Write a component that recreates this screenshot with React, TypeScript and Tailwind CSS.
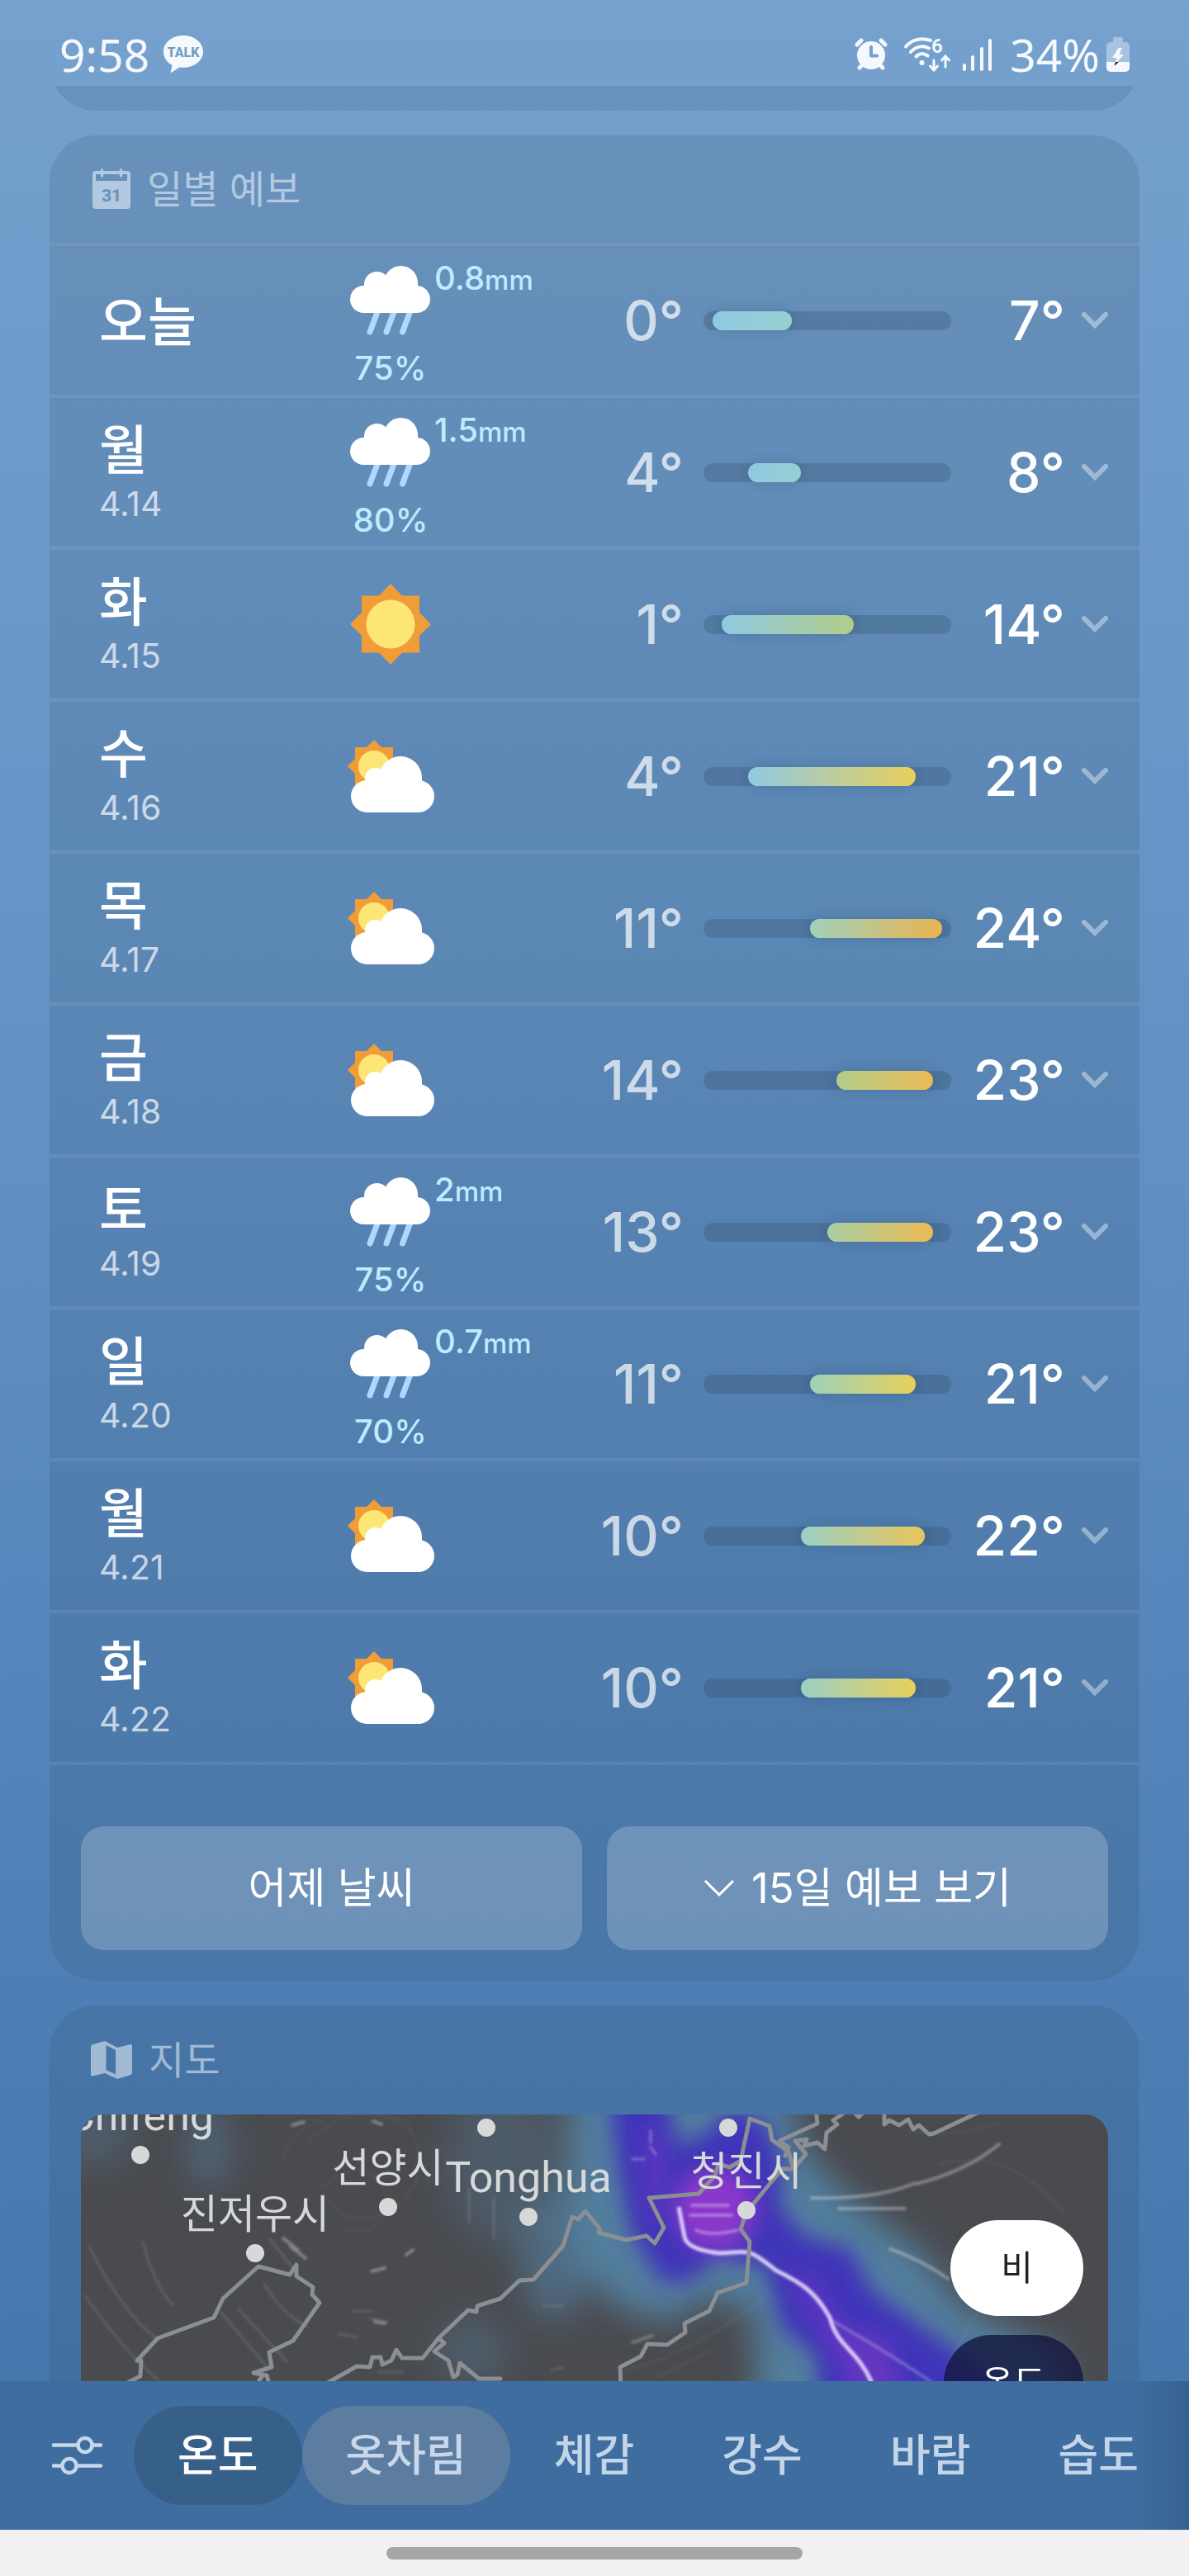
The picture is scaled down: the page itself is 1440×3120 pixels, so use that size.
import type { ReactNode } from "react";

type Sky = "rain" | "sun" | "partly";

type Day = {
  name: string;
  date?: string;
  sky: Sky;
  amount?: string;
  chance?: number;
  low: number;
  high: number;
};

const days: Day[] = [
  { name: "오늘", sky: "rain", amount: "0.8", chance: 75, low: 0, high: 7 },
  { name: "월", date: "4.14", sky: "rain", amount: "1.5", chance: 80, low: 4, high: 8 },
  { name: "화", date: "4.15", sky: "sun", low: 1, high: 14 },
  { name: "수", date: "4.16", sky: "partly", low: 4, high: 21 },
  { name: "목", date: "4.17", sky: "partly", low: 11, high: 24 },
  { name: "금", date: "4.18", sky: "partly", low: 14, high: 23 },
  { name: "토", date: "4.19", sky: "rain", amount: "2", chance: 75, low: 13, high: 23 },
  { name: "일", date: "4.20", sky: "rain", amount: "0.7", chance: 70, low: 11, high: 21 },
  { name: "월", date: "4.21", sky: "partly", low: 10, high: 22 },
  { name: "화", date: "4.22", sky: "partly", low: 10, high: 21 },
];

const tabs = ["온도", "옷차림", "체감", "강수", "바람", "습도"];

// temperature -> bar colour, highest matching step wins
const steps: [number, string][] = [
  [0, "#8fc9e2"],
  [7, "#96d0d0"],
  [10, "#9bd0c4"],
  [11, "#9fd1ba"],
  [13, "#a9cfa2"],
  [14, "#b1cd8a"],
  [21, "#e8d05c"],
  [22, "#e9c55a"],
  [23, "#eabb55"],
  [24, "#eab452"],
];

function colorAt(t: number) {
  return steps.filter(([min]) => t >= min).pop()![1];
}

/* ---------- icons ---------- */

function TalkIcon() {
  return (
    <svg width="50" height="48" viewBox="0 0 50 48" aria-label="KakaoTalk">
      <path
        d="M25 1C11.500 1 1 9.500 1 20.500c0 7 4 13 10.500 16.500L9.500 46.500 20.500 39.500c1.500.2 3 .3 4.500.3 13.500 0 24-8.500 24-19.300S38.500 1 25 1z"
        fill="#f5f9fd"
      />
      <text x="25" y="27" textAnchor="middle" fontSize="16" fontWeight="800" fill="#6f9bc8" fontFamily="Roboto, sans-serif">
        TALK
      </text>
    </svg>
  );
}

function AlarmIcon() {
  return (
    <svg width="40" height="40" viewBox="0 0 40 40" aria-label="Alarm">
      <g stroke="#f5f9fd" strokeWidth="5" strokeLinecap="round">
        <path d="M3 8l5-5M37 8l-5-5M6 36l5-5M34 36l-5-5" />
      </g>
      <circle cx="20" cy="21" r="17" fill="#f5f9fd" />
      <path d="M20 11v10.500h7" fill="none" stroke="#76a1ce" strokeWidth="4" strokeLinecap="round" strokeLinejoin="round" />
    </svg>
  );
}

function WifiIcon() {
  return (
    <svg width="58" height="42" viewBox="0 0 58 42" className="overflow-visible" aria-label="Wi-Fi 6">
      <g fill="none" stroke="#f5f9fd" strokeWidth="4" strokeLinecap="round">
        <path d="M2 11.500C10 2 22 .5 32 4" />
        <path d="M8 18c6-7 15-8.500 22-4.500" />
        <path d="M14.500 23.500c4-4 9-4.500 14-1" />
        <path d="M36 28v11M31.500 35l4.500 5 4.500-5M50 36V24M45.500 28l4.500-5 4.500 5" strokeWidth="3" />
      </g>
      <circle cx="21.500" cy="31" r="3" fill="#f5f9fd" />
      <text x="33" y="19" fontSize="24" fontWeight="600" fill="#f5f9fd" fontFamily="Roboto, sans-serif">
        6
      </text>
    </svg>
  );
}

function SignalIcon() {
  return (
    <svg width="38" height="40" viewBox="0 0 38 40" aria-label="Signal">
      <path d="M3 33v5M13 23v15M24 13v25M34 3v35" stroke="#f5f9fd" strokeWidth="4" strokeLinecap="round" />
    </svg>
  );
}

function BatteryIcon() {
  return (
    <svg width="28" height="42" viewBox="0 0 28 42" aria-label="Charging">
      <path d="M8 2a2 2 0 012-2h8a2 2 0 012 2v4h3a5 5 0 015 5v19H0V11a5 5 0 015-5h3z" fill="#a8c3e0" />
      <path d="M0 30h28v7a5 5 0 01-5 5H5a5 5 0 01-5-5z" fill="#f5f9fd" />
      <path d="M14.500 13L7 25h5.500l-3 9L21 21h-5.500L19 13z" fill="#f5f9fd" />
      <path d="M11 30h4l-5.500 5z" fill="#222" />
    </svg>
  );
}

function CalendarIcon() {
  return (
    <svg width="46" height="50" viewBox="0 0 46 50" aria-hidden="true">
      <path
        fillRule="evenodd"
        d="M4 3h38a4 4 0 014 4v38a4 4 0 01-4 4H4a4 4 0 01-4-4V7a4 4 0 014-4zM4 7v8h38V7z"
        fill="#b2c9df"
      />
      <path d="M11.500 2v7M34.500 2v7" stroke="#b2c9df" strokeWidth="3.500" strokeLinecap="round" />
      <text x="23" y="40" textAnchor="middle" fontSize="21" fontWeight="800" fill="#6994bc" fontFamily="Roboto, sans-serif">
        31
      </text>
    </svg>
  );
}

function MapIcon() {
  return (
    <svg width="50" height="46" viewBox="0 0 50 46" aria-hidden="true">
      <path
        fillRule="evenodd"
        d="M1.500 4.500L17 0l15 8 16-4q2-.5 2 1.500v33q0 2-1.500 2.500L32 46l-15-7-15 3.500q-2 .5-2-1.500V7q0-2 1.500-2.500zM18.500 5v30L30 40.500V11z"
        fill="#a1bad4"
      />
    </svg>
  );
}

function RainIcon() {
  return (
    <svg width="98" height="84" viewBox="0 0 98 84" aria-label="비">
      <path d="M33 56l-9 24M53 56l-9 24M72.500 56l-9 24" stroke="#b0d7fd" strokeWidth="7" strokeLinecap="round" />
      <g fill="#fff">
        <circle cx="16.500" cy="40.500" r="16.500" />
        <circle cx="80.500" cy="40.500" r="16.500" />
        <circle cx="61.500" cy="20.500" r="20.500" />
        <circle cx="32.500" cy="22.500" r="15.500" />
        <path d="M17 22h65v18l-2 17H16.500z" />
      </g>
    </svg>
  );
}

function SunIcon() {
  return (
    <svg width="98" height="98" viewBox="0 0 98 98" aria-label="맑음">
      <path d="M49 0l14 14.500h21V35L98 49 84 63v20.500H63L49 98 35 83.500H14V63L0 49l14-14V14.500h21z" fill="#f09d38" />
      <circle cx="49" cy="49" r="29.500" fill="#fbe676" />
    </svg>
  );
}

function PartlyIcon() {
  return (
    <svg width="105" height="88" viewBox="0 0 105 88" aria-label="구름 조금">
      <path d="M32 0l9 9h14v14l9 9-9 9v14H41l-9 9-9-9H9V41L0 32l9-9V9h14z" fill="#f09d38" />
      <circle cx="32" cy="32" r="19" fill="#fbe676" />
      <g fill="#fff">
        <circle cx="23.500" cy="68.500" r="19.500" />
        <circle cx="85.500" cy="68.500" r="19.500" />
        <circle cx="64" cy="46" r="26" />
        <circle cx="33.500" cy="46.500" r="12.500" />
        <path d="M22 46h68v10l-4 32H23.500z" />
      </g>
    </svg>
  );
}

function SlidersIcon() {
  return (
    <svg width="61" height="48" viewBox="0 0 61 48" aria-hidden="true">
      <g fill="none" stroke="#c5d7ea" strokeWidth="4.500" strokeLinecap="round">
        <path d="M2 11.500h29M49 11.500h10M2 36.500h10M31 36.500h28" />
        <circle cx="40" cy="11.500" r="8.500" />
        <circle cx="21" cy="36.500" r="8.500" />
      </g>
    </svg>
  );
}

const skyIcons: Record<Sky, ReactNode> = {
  rain: <RainIcon />,
  sun: <SunIcon />,
  partly: <PartlyIcon />,
};

/* ---------- pieces ---------- */

function StatusBar() {
  return (
    <header className="flex h-[104px] shrink-0 items-center justify-between pt-7 pr-[72px] pl-[72px] font-['Noto_Sans'] text-[55px] leading-[74px] text-[#f5f9fd]">
      <div className="flex items-center gap-4">
        <span>9:58</span>
        <TalkIcon />
      </div>
      <div className="flex items-center">
        <AlarmIcon />
        <span className="ml-5">
          <WifiIcon />
        </span>
        <span className="ml-3">
          <SignalIcon />
        </span>
        <span className="ml-5">34%</span>
        <span className="ml-2">
          <BatteryIcon />
        </span>
      </div>
    </header>
  );
}

function TempBar({ low, high }: { low: number; high: number }) {
  return (
    <div className="h-[23px] w-[300px] rounded-full bg-[#1e3246]/20 px-[11px]">
      <div
        className="h-full rounded-full shadow-[0_0_16px_rgba(20,50,80,0.22)]"
        style={{
          marginLeft: `${(low / 26) * 100}%`,
          width: `${((high + 2 - low) / 26) * 100}%`,
          background: `linear-gradient(90deg, ${colorAt(low)}, ${colorAt(high)})`,
        }}
      />
    </div>
  );
}

function DayRow({ day }: { day: Day }) {
  return (
    <li className="flex h-[184px] items-center border-b-4 border-white/8 pr-[38px] pl-[60px]">
      <div className="w-[300px] pt-1">
        <p className="text-[64px] leading-[72px] font-medium text-white">{day.name}</p>
        {day.date && <p className="text-[41px] leading-[58px] text-white/70">{day.date}</p>}
      </div>
      <div className="flex h-full w-[106px] flex-col items-center justify-center">
        {skyIcons[day.sky]}
        {day.chance && (
          <p className="mt-4 -mb-4 text-[40px] leading-[48px] font-medium text-[#bdebff]">{day.chance}%</p>
        )}
      </div>
      <div className="h-full flex-1 pt-[15px]">
        {day.amount && (
          <p className="text-[40px] leading-[48px] font-medium text-[#bdebff]">
            {day.amount}
            <span className="text-[33px]">mm</span>
          </p>
        )}
      </div>
      <p className="w-[140px] text-right text-[66px] leading-[80px] font-medium text-white/70">{day.low}°</p>
      <div className="mx-6">
        <TempBar low={day.low} high={day.high} />
      </div>
      <p className="w-[114px] text-right text-[66px] leading-[80px] font-medium text-white">{day.high}°</p>
      <button type="button" aria-label={`${day.name} 상세`} className="ml-5">
        <svg width="32" height="20" viewBox="0 0 32 20" fill="none">
          <path d="M3 3l13 13L29 3" stroke="#fff" strokeOpacity=".4" strokeWidth="6" strokeLinecap="round" />
        </svg>
      </button>
    </li>
  );
}

function MapDrawing() {
  return (
    <svg
      className="absolute inset-0 h-full w-full"
      viewBox="0 0 1244 640"
      preserveAspectRatio="xMidYMin slice"
      aria-label="강수 지도"
    >
      <defs>
        <filter id="soft" x="-50%" y="-50%" width="200%" height="200%">
          <feGaussianBlur stdDeviation="20" />
        </filter>
        <filter id="mid" x="-50%" y="-50%" width="200%" height="200%">
          <feGaussianBlur stdDeviation="13" />
        </filter>
        <filter id="thin" x="-20%" y="-20%" width="140%" height="140%">
          <feGaussianBlur stdDeviation="1.500" />
        </filter>
      </defs>
      <rect width="1244" height="640" fill="#4a4b4f" />

      {/* light rain */}
      <g fill="#527f9f" filter="url(#soft)">
        <path d="M590-40H850L880 50 930 100 1020 170 1070 235 1180 285 1210 400H820L815 240 760 220 720 250 660 240 590 170z" />
        <ellipse cx="575" cy="170" rx="45" ry="80" opacity=".6" />
        <ellipse cx="155" cy="40" rx="26" ry="50" opacity=".5" />
        <ellipse cx="15" cy="15" rx="50" ry="50" opacity=".35" />
        <ellipse cx="475" cy="285" rx="45" ry="40" opacity=".35" />
        <ellipse cx="510" cy="60" rx="70" ry="100" opacity=".3" />
      </g>
      {/* heavy rain */}
      <g fill="#3f36b9" filter="url(#mid)">
        <path d="M638-40H708L722 40 760 20 790-10 830 10 850 60 845 110 880 150 930 160 960 215 1030 265 1110 320 1130 400H900L890 290 850 260 830 185 770 170 735 205 700 200 665 140 650 60z" />
      </g>
      <g fill="#8a37cb" filter="url(#mid)">
        <ellipse cx="768" cy="115" rx="50" ry="50" />
        <ellipse cx="695" cy="70" rx="12" ry="60" opacity=".4" />
        <path d="M855 190l25 5 40 60 60 20 15 60-50 20-40-80z" opacity=".5" />
      </g>

      {/* wind traces */}
      <g fill="none" stroke="#fff" strokeLinecap="round" filter="url(#thin)">
        <g opacity=".12" strokeWidth="3">
          <path d="M75 155q15 55 37 76M10 160q40 80 80 110M170 240l55 65M190 235l60 65M5 220q50 70 90 103M228 150l32 40M222 205q20 35 52 52" />
          <path d="M270 40q60-70 130-20 30 60-30 100-50 20-70-20M290 90q60-50 80 10 0 50-50 40M240 60q40-90 160-50" opacity=".3" />
          <path d="M330 238h22M350 247l22 4M312 266l22 4M360 312h30M470 90v40M500 100v50M560 232h24M570 310l14-4" />
          <path d="M660 310q80-20 170-90M700 317l60-30M1040 60q90-20 150 60M1050 300l60-100M1000 20q60 10 110-10" opacity=".4" />
        </g>
        <g opacity=".32" strokeWidth="4">
          <path d="M256 13l14-4M354 8l10 4M885 101q80 2 125-18M918 114h80M1012 84q60-15 100-48M980 163q40 14 70 36" />
          <path d="M245 150l18 14M254 160l18 14M352 190l16-4M394 170l8-6M356 251l12 2M740 110h44M738 122h50M745 140q20 8 50 0" />
          <path d="M910 250q70 40 120 74M668 276l24-8M690 40l6 8M668 54h14M690 20v14" opacity=".7" />
        </g>
      </g>
      <path
        d="M724 112L731 148Q734 164 774 168C812 166 808 162 842 189 875 205 890 216 907 246 915 280 940 285 957 323L980 380"
        fill="none"
        stroke="#e6dcff"
        strokeWidth="5"
        opacity=".9"
        filter="url(#thin)"
      />

      {/* borders */}
      <g fill="none" stroke="#8b8e92" strokeWidth="5" strokeLinejoin="round" strokeLinecap="round">
        <path d="M40 335L60 323 72 317 73 298 68 298 93 271 161 246 172 223 215 184 253 194 261 182 261 196 281 209 280 218 289 228 257 274 228 288 231 306 209 313 225 316 228 326M216 322l4-6" />
        <path d="M290 330L334 305 350 306 353 294 363 294 365 303 376 298 382 285 389 295 414 295 433 271 469 237 479 239 480 232 508 223 531 201 548 200 584 159 595 124 602 127 611 117 628 138 627 143 660 152 685 147 695 156 706 137 688 101 748 96 768 74 772 60 786 64 799 56 810 5 834 14 837 31 857 45 863 66 849 66 813 110 806 117 799 139 810 154 806 204 771 216 761 238 731 253 732 264 710 279 686 278 678 293 653 306 654 330" />
        <path d="M433 271L440 277 428 287 445 298 451 318 456 315 459 301 482 320 508 320" />
        <path d="M890-5L892 11 846 32 857 40 853 50M863 66L878 48 865 32 879 30 876 38 892 34 901 42 903 22 916 12 911 7 926-3M936-3L942 3 948-3M973-3L973 12 979 7 991 13 1002 6 1008 18 1015 13 1027 24 1033 23 1088-3" />
      </g>

      {/* cities */}
      <g fill="#d6d9d8">
        <circle cx="72" cy="49" r="11" />
        <circle cx="211" cy="168" r="11" />
        <circle cx="372" cy="112" r="11" />
        <circle cx="491" cy="16" r="11" />
        <circle cx="542" cy="124" r="11" />
        <circle cx="784" cy="16" r="11" />
        <circle cx="806" cy="116" r="11" />
      </g>
      <g fill="#d6d9d8" textAnchor="middle" fontSize="52" fontFamily="Roboto, 'Noto Sans CJK KR', sans-serif">
        <text x="72" y="19">Chifeng</text>
        <text x="542" y="94">Tonghua</text>
      </g>
      <g fill="#d6d9d8" textAnchor="middle" fontSize="49" fontFamily="'Noto Sans CJK KR', sans-serif">
        <text x="211" y="138">진저우시</text>
        <text x="372" y="82">선양시</text>
        <text x="806" y="86">청진시</text>
      </g>
    </svg>
  );
}

export default function App() {
  return (
    <div className="flex h-screen flex-col overflow-hidden bg-linear-to-b from-[#76a1ce] from-0% via-[#6090c4] via-45% to-[#4677ad] to-92% font-[Inter,'Noto_Sans_CJK_KR',sans-serif]">
      <StatusBar />

      <main className="flex min-h-0 flex-1 flex-col gap-[30px] overflow-hidden px-[60px]">
        {/* tail of the hourly card */}
        <div className="flex h-[30px] shrink-0 flex-col justify-end overflow-hidden">
          <div className="h-[120px] shrink-0 rounded-[56px] bg-[#28465a]/15" />
        </div>

        <section className="shrink-0 rounded-[56px] bg-[#28465a]/15">
          <h2 className="flex h-[134px] items-center gap-5 border-b-4 border-white/8 pl-[52px] text-[47px] leading-[60px] text-[#b2c9df]">
            <CalendarIcon />
            일별 예보
          </h2>
          <ul>
            {days.map((day, i) => (
              <DayRow key={i} day={day} />
            ))}
          </ul>
          <div className="grid grid-cols-2 gap-[30px] px-[38px] pt-[74px] pb-[37px]">
            <button type="button" className="h-[150px] rounded-[28px] bg-white/20 text-[51px] leading-[60px] text-white">
              어제 날씨
            </button>
            <button
              type="button"
              className="flex h-[150px] items-center justify-center gap-5 rounded-[28px] bg-white/20 text-[51px] leading-[60px] text-white"
            >
              <svg width="38" height="22" viewBox="0 0 38 22" fill="none" aria-hidden="true">
                <path d="M2 2l17 17L36 2" stroke="#fff" strokeWidth="3" />
              </svg>
              15일 예보 보기
            </button>
          </div>
        </section>

        <section className="shrink-0 rounded-t-[56px] bg-[#28465a]/15 px-[38px]">
          <h2 className="flex h-[132px] items-center gap-5 pl-3 text-[47px] leading-[60px] text-[#a1bad4]">
            <MapIcon />
            지도
          </h2>
          <div className="relative h-[640px] overflow-hidden rounded-[28px]">
            <MapDrawing />
            <div className="relative flex flex-col items-end gap-[23px] pt-32 pr-[30px] text-[42px] leading-[56px]">
              <button type="button" className="h-[116px] w-[161px] rounded-full bg-white text-[#222]">
                비
              </button>
              <button type="button" className="h-[116px] w-[169px] rounded-full bg-[#14163f]/80 text-white">
                온도
              </button>
            </div>
          </div>
        </section>
      </main>

      <nav className="relative flex h-[180px] shrink-0 items-center overflow-hidden bg-[#3f6d9f] pl-[63px]">
        <button type="button" aria-label="설정" className="mr-[38px] shrink-0">
          <SlidersIcon />
        </button>
        {tabs.map((tab, i) => (
          <button
            key={tab}
            type="button"
            className={
              "h-[120px] shrink-0 rounded-full px-[53px] text-[53px] leading-[64px] font-medium " +
              (i === 0 ? "bg-[#376089] text-white" : i === 1 ? "bg-[#5d7da0] text-[#c8d8ea]" : "text-[#c3d5e9]")
            }
          >
            {tab}
          </button>
        ))}
        <div className="pointer-events-none absolute inset-y-0 right-0 w-16 bg-linear-to-r from-transparent to-[#355f8c]/80" />
      </nav>

      <div className="flex h-14 shrink-0 items-center justify-center bg-[#f1f1f1]">
        <div className="h-[15px] w-[504px] rounded-full bg-[#a6a6a6]" />
      </div>
    </div>
  );
}
